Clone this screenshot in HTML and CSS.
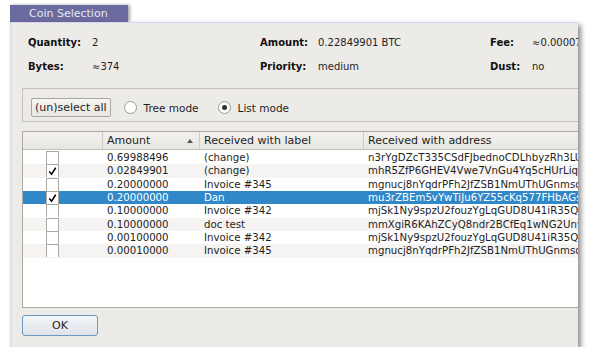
FILE: index.html
```html
<!DOCTYPE html>
<html lang="en">
<head>
    <meta charset="UTF-8">
    <title>Coin Selection</title>
    <link rel="stylesheet" href="styles.css">
</head>
<body>
    <div class="screen">
        <div class="tab">Coin Selection</div>
        <div class="window">
            <div class="summary">
                <span class="lbl">Quantity:</span><span>2</span>
                <span class="lbl">Amount:</span><span>0.22849901 BTC</span>
                <span class="lbl">Fee:</span><span>&asymp;0.00007</span>
                <span class="lbl">Bytes:</span><span>&asymp;374</span>
                <span class="lbl">Priority:</span><span>medium</span>
                <span class="lbl">Dust:</span><span>no</span>
            </div>

            <div class="mode-box">
                <button class="btn">(un)select all</button>
                <label class="radio"><span class="dot"></span>Tree mode</label>
                <label class="radio on"><span class="dot"></span>List mode</label>
            </div>

            <div class="table">
                <div class="row head">
                    <div class="c-check"></div>
                    <div class="c-amount">Amount <span class="sort"></span></div>
                    <div class="c-label">Received with label</div>
                    <div class="c-addr">Received with address</div>
                </div>
                <div class="row">
                    <div class="c-check"><span class="box"></span></div>
                    <div class="c-amount">0.69988496</div>
                    <div class="c-label">(change)</div>
                    <div class="c-addr">n3rYgDZcT335CSdFJbednoCDLhbyzRh3LUx9</div>
                </div>
                <div class="row alt">
                    <div class="c-check"><span class="box"><svg viewBox="0 0 12 12"><path d="M2.5 6.5 L5 9.5 L9.5 2.5"/></svg></span></div>
                    <div class="c-amount">0.02849901</div>
                    <div class="c-label">(change)</div>
                    <div class="c-addr">mhR5ZfP6GHEV4Vwe7VnGu4Yq5cHUrLiqXp</div>
                </div>
                <div class="row">
                    <div class="c-check"><span class="box"></span></div>
                    <div class="c-amount">0.20000000</div>
                    <div class="c-label">Invoice #345</div>
                    <div class="c-addr">mgnucj8nYqdrPFh2JfZSB1NmUThUGnmsqe</div>
                </div>
                <div class="row sel">
                    <div class="c-check"><span class="box"><svg viewBox="0 0 12 12"><path d="M2.5 6.5 L5 9.5 L9.5 2.5"/></svg></span></div>
                    <div class="c-amount">0.20000000</div>
                    <div class="c-label">Dan</div>
                    <div class="c-addr">mu3rZBEm5vYwTiJu6YZ55cKq577FHbAGsw</div>
                </div>
                <div class="row">
                    <div class="c-check"><span class="box"></span></div>
                    <div class="c-amount">0.10000000</div>
                    <div class="c-label">Invoice #342</div>
                    <div class="c-addr">mjSk1Ny9spzU2fouzYgLqGUD8U41iR35QN</div>
                </div>
                <div class="row alt">
                    <div class="c-check"><span class="box"></span></div>
                    <div class="c-amount">0.10000000</div>
                    <div class="c-label">doc test</div>
                    <div class="c-addr">mmXgiR6KAhZCyQ8ndr2BCfEq1wNG2UnyG6</div>
                </div>
                <div class="row">
                    <div class="c-check"><span class="box"></span></div>
                    <div class="c-amount">0.00100000</div>
                    <div class="c-label">Invoice #342</div>
                    <div class="c-addr">mjSk1Ny9spzU2fouzYgLqGUD8U41iR35QN</div>
                </div>
                <div class="row alt">
                    <div class="c-check"><span class="box"></span></div>
                    <div class="c-amount">0.00010000</div>
                    <div class="c-label">Invoice #345</div>
                    <div class="c-addr">mgnucj8nYqdrPFh2JfZSB1NmUThUGnmsqe</div>
                </div>
            </div>

            <button class="btn ok">OK</button>
        </div>
    </div>
</body>
</html>
```

FILE: styles.css
```css
body {
    margin: 0;
    background: #fff;
    font-family: "DejaVu Sans", Verdana, sans-serif;
    font-size: 10px;
    color: #1e1e1e;
}
.screen {
    padding: 5px 0 0 10px;
}
.tab {
    width: 118px;
    height: 17px;
    line-height: 17px;
    box-sizing: border-box;
    padding-left: 19px;
    background: #6b6b9f;
    color: #e6e6f4;
    font-size: 11px;
    box-shadow: 2px 0 3px rgba(0,0,0,0.35);
}
.window {
    width: 568px;
    height: 325px;
    box-sizing: border-box;
    background: #edebe7;
    border-top: 1px solid #d6d6ee;
    border-left: 2px solid #dedef0;
    box-shadow: 3px 3px 5px rgba(0,0,0,0.45);
    overflow: hidden;
    padding: 7px 0 0 10px;
}
.summary {
    display: grid;
    grid-template-columns: 64px 168px 58px 172px 42px 80px;
    grid-auto-rows: 24px;
    align-items: center;
    padding-left: 6px;
    white-space: nowrap;
}
.lbl {
    font-weight: bold;
    color: #111;
}
.mode-box {
    margin-top: 10px;
    width: 600px;
    height: 34px;
    box-sizing: border-box;
    border: 1px solid #c4c0ba;
    padding: 9px 0 0 8px;
    display: flex;
    align-items: flex-start;
    font-size: 10.5px;
}
.btn {
    font-family: inherit;
    font-size: 11px;
    color: #1e1e1e;
    height: 19px;
    padding: 0 3px;
    border: 1px solid #aaa6a0;
    border-radius: 2px;
    background: linear-gradient(#f6f5f3, #e9e7e3);
}
.radio {
    display: flex;
    align-items: center;
    height: 19px;
    margin-left: 13px;
    margin-right: 6px;
}
.dot {
    width: 11px;
    height: 11px;
    border: 1px solid #9c9892;
    border-radius: 50%;
    background: #fff;
    margin-right: 7px;
    position: relative;
}
.radio.on .dot::after {
    content: "";
    position: absolute;
    left: 3px;
    top: 3px;
    width: 5px;
    height: 5px;
    border-radius: 50%;
    background: #333;
}
.table {
    margin-top: 9px;
    width: 600px;
    height: 177px;
    box-sizing: border-box;
    border: 1px solid #aca8a2;
    background: #fff;
}
.row {
    display: grid;
    grid-template-columns: 80px 97px 164px 260px;
    height: 13.33px;
    line-height: 13.33px;
    font-size: 10.2px;
    white-space: nowrap;
}
.row > div {
    overflow: hidden;
    padding-left: 4px;
}
.row.alt {
    background: #f5f4f2;
}
.row.sel {
    background: #3088c8;
    color: #fff;
}
.row.head {
    height: 17px;
    line-height: 17px;
    background: linear-gradient(#f2f1ef, #e8e6e2);
    border-bottom: 1px solid #c6c2bc;
    margin-bottom: 1px;
    font-size: 11px;
}
.row.head > div {
    border-right: 1px solid #cdc9c3;
}
.row.head .c-amount {
    position: relative;
}
.sort {
    position: absolute;
    right: 6px;
    top: 7px;
    border-left: 3px solid transparent;
    border-right: 3px solid transparent;
    border-bottom: 4px solid #555;
}
.c-check {
    display: flex;
    align-items: center;
}
.box {
    margin-left: 19px;
    width: 11px;
    height: 12px;
    border: 1px solid #aca8a2;
    border-bottom: none;
    background: #fff;
    display: block;
}
.box svg {
    width: 11px;
    height: 12px;
    display: block;
}
.box path {
    fill: none;
    stroke: #000;
    stroke-width: 1.7;
}
.ok {
    margin-top: 7px;
    width: 76px;
    height: 21px;
    border: 1px solid #6e98bf;
    border-radius: 3px;
    background: linear-gradient(#f4f6f8, #dde3e9);
}
```
